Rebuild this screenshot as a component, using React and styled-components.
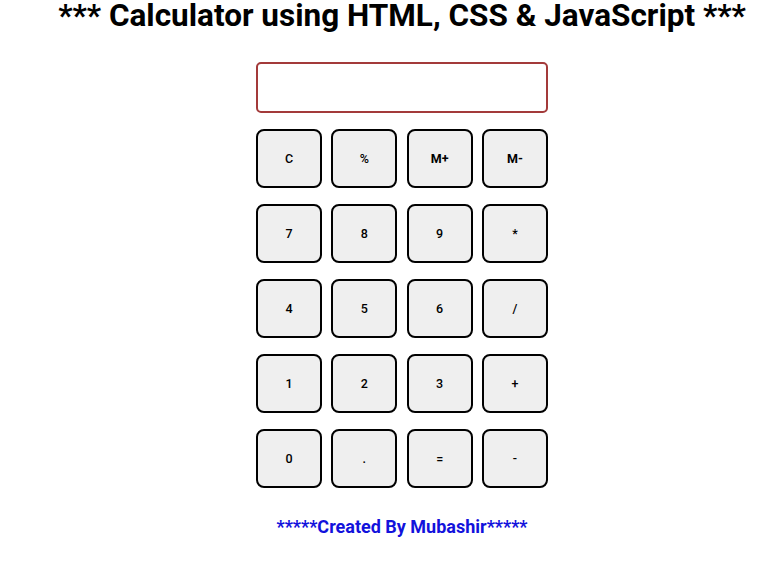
import React from "react";
import styled, { createGlobalStyle } from "styled-components";

const GlobalStyle = createGlobalStyle`
  body {
    margin: 0;
    background: #ffffff;
    font-family: Roboto, "Liberation Sans", sans-serif;
  }
`;

const Page = styled.div`
  display: flex;
  flex-direction: column;
  align-items: center;
  padding-left: 20px;
`;

const Title = styled.h1`
  margin: 0;
  font-size: 31.5px;
  font-weight: 700;
  color: #000;
  white-space: nowrap;
  line-height: 32px;
`;

const Calc = styled.div`
  margin-top: 30px;
  width: 292px;
  display: flex;
  flex-direction: column;
`;

const Display = styled.input`
  box-sizing: border-box;
  width: 292px;
  height: 51px;
  border: 2px solid #a33a3a;
  border-radius: 5px;
  outline: none;
  background: #fff;
`;

const Keys = styled.div`
  margin-top: 16px;
  display: grid;
  grid-template-columns: repeat(4, 66px);
  justify-content: space-between;
  row-gap: 16px;
`;

const Key = styled.button`
  box-sizing: border-box;
  height: 59px;
  border: 2px solid #000;
  border-radius: 8px;
  background: #efefef;
  font-family: Roboto, "Liberation Sans", sans-serif;
  font-size: 12.5px;
  font-weight: ${(p) => (p.$bold ? 700 : 500)};
  color: #000;
  padding: 0;
`;

const Footer = styled.p`
  margin: 28px 0 0;
  font-size: 18px;
  font-weight: 700;
  color: #1212dc;
`;

const keys = ["C", "%", "M+", "M-", "7", "8", "9", "*", "4", "5", "6", "/", "1", "2", "3", "+", "0", ".", "=", "-"];

export default function App() {
  return (
    <>
      <GlobalStyle />
      <Page>
        <Title>*** Calculator using HTML, CSS &amp; JavaScript ***</Title>
        <Calc>
          <Display type="text" readOnly />
          <Keys>
            {keys.map((k) => (
              <Key key={k} $bold={k.startsWith("M")}>
                {k}
              </Key>
            ))}
          </Keys>
        </Calc>
        <Footer>*****Created By Mubashir*****</Footer>
      </Page>
    </>
  );
}
